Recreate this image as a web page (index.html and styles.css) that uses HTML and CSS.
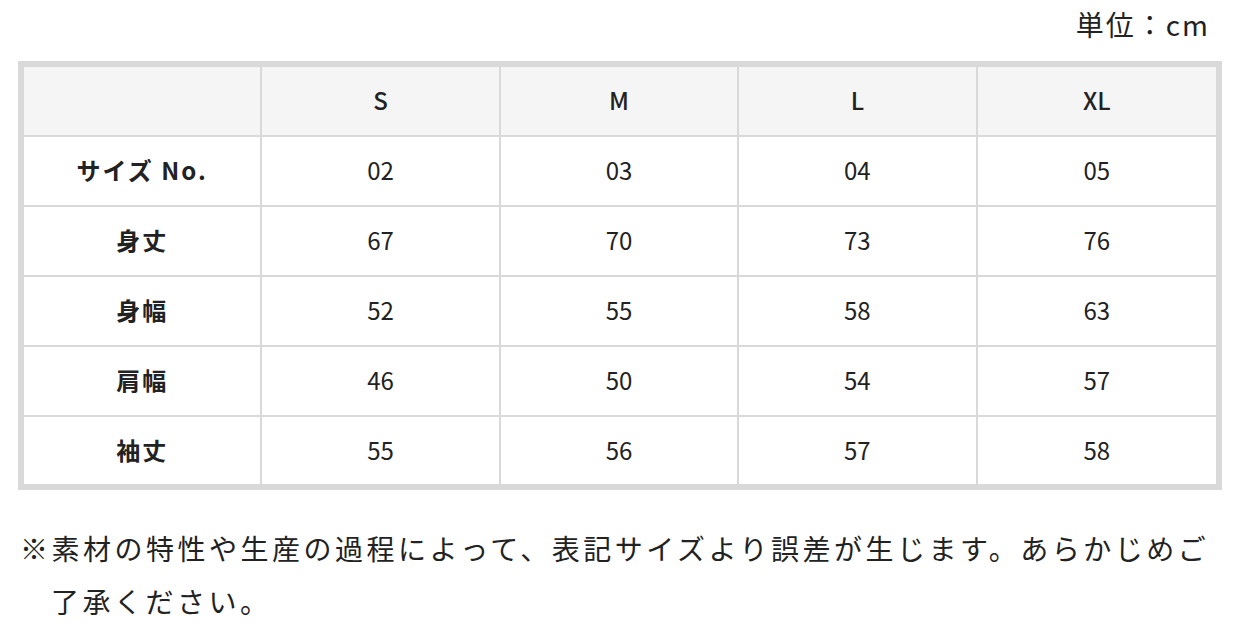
FILE: index.html
```html
<!DOCTYPE html>
<html lang="ja">
<head>
<meta charset="utf-8">
<link rel="stylesheet" href="styles.css">
</head>
<body>
<div class="page">
  <div class="unit">単位：cm</div>
  <table class="size-table">
    <thead>
      <tr><th class="label"></th><th>S</th><th>M</th><th>L</th><th>XL</th></tr>
    </thead>
    <tbody>
      <tr><th class="label">サイズ No.</th><td>02</td><td>03</td><td>04</td><td>05</td></tr>
      <tr><th class="label">身丈</th><td>67</td><td>70</td><td>73</td><td>76</td></tr>
      <tr><th class="label">身幅</th><td>52</td><td>55</td><td>58</td><td>63</td></tr>
      <tr><th class="label">肩幅</th><td>46</td><td>50</td><td>54</td><td>57</td></tr>
      <tr><th class="label">袖丈</th><td>55</td><td>56</td><td>57</td><td>58</td></tr>
    </tbody>
  </table>
  <p class="note">※素材の特性や生産の過程によって、表記サイズより誤差が生じます。あらかじめご了承ください。</p>
</div>
</body>
</html>
```
FILE: styles.css
```css
html, body {
  margin: 0;
  padding: 0;
  background: #fff;
}
body {
  font-family: "Noto Sans CJK JP", "Noto Sans", sans-serif;
  color: #222;
}
.page {
  padding: 0 24px 0 18px;
}
.unit {
  text-align: right;
  font-size: 28px;
  line-height: 48px;
  letter-spacing: 2px;
  padding-right: 12px;
  margin-bottom: 13px;
}
.size-table {
  width: 100%;
  table-layout: fixed;
  border-collapse: separate;
  border-spacing: 0;
  border: 6px solid #d9d9d9;
}
.size-table th,
.size-table td {
  height: 70px;
  padding: 0 0 3px;
  box-sizing: border-box;
  text-align: center;
  vertical-align: middle;
  font-size: 24px;
  border-right: 2px solid #d9d9d9;
  border-bottom: 2px solid #d9d9d9;
}
.size-table tr > :last-child {
  border-right: none;
}
.size-table tbody tr:last-child > * {
  border-bottom: none;
  height: 67px;
}
.size-table thead th {
  background: #f5f5f5;
  font-weight: 500;
}
.size-table td {
  font-weight: 400;
}
.size-table th.label {
  font-weight: 700;
  letter-spacing: 2px;
}
.note {
  margin: 32px 0 0 2px;
  font-size: 28px;
  line-height: 53px;
  letter-spacing: 3.5px;
  padding-left: 31px;
  text-indent: -31px;
}
```
